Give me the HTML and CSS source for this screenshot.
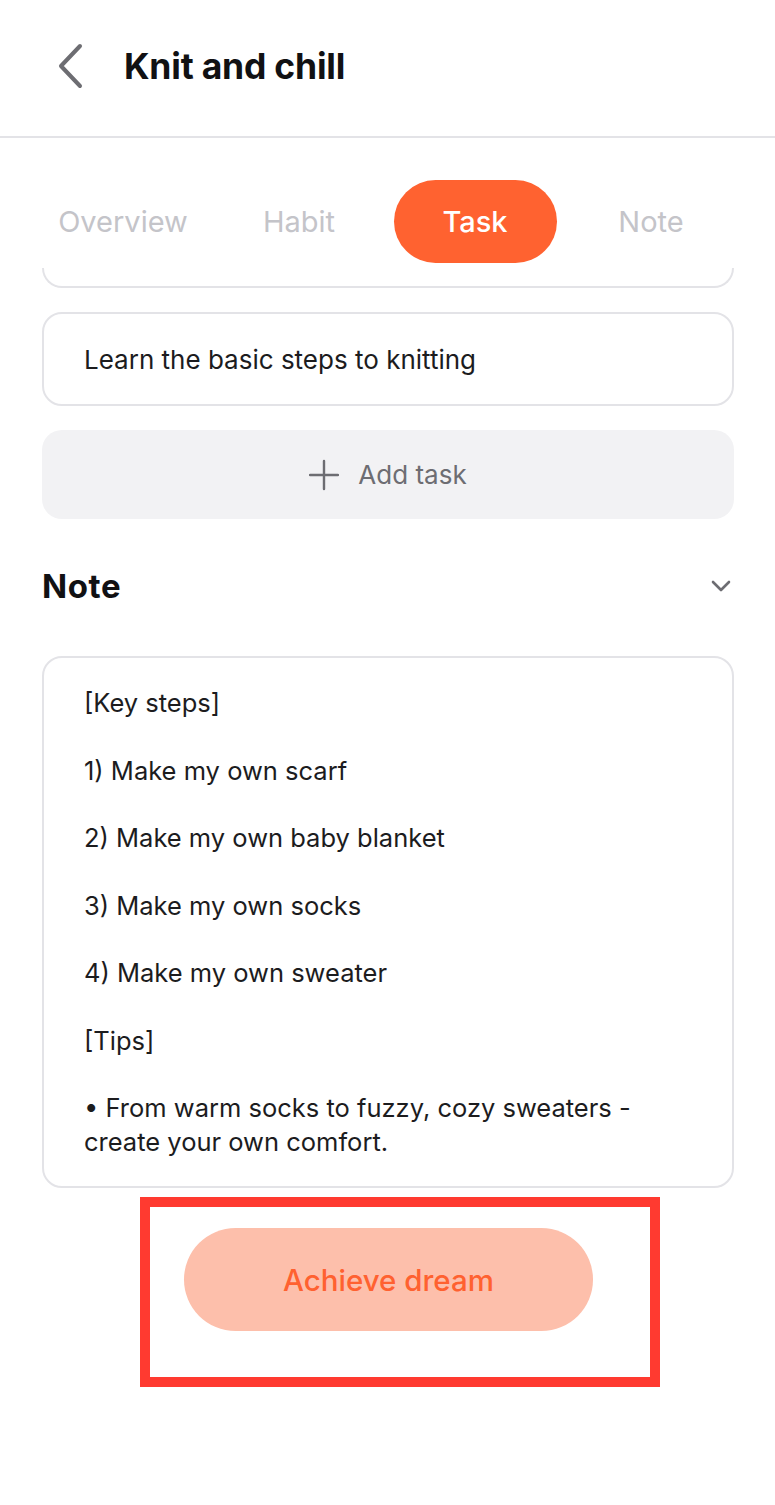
FILE: index.html
```html
<!DOCTYPE html>
<html lang="en">
<head>
<meta charset="utf-8">
<title>Knit and chill</title>
<link rel="stylesheet" href="styles.css">
</head>
<body>
<div class="screen">
  <header class="topbar">
    <svg class="back" width="30" height="46" viewBox="0 0 30 46" aria-hidden="true">
      <path d="M24 3 L5 23 L24 43" fill="none" stroke="#6d6d72" stroke-width="4" stroke-linecap="round" stroke-linejoin="round"/>
    </svg>
    <h1 class="title">Knit and chill</h1>
  </header>

  <nav class="tabs">
    <span class="tab">Overview</span>
    <span class="tab">Habit</span>
    <span class="tab tab-active">Task</span>
    <span class="tab">Note</span>
  </nav>

  <main class="content">
    <div class="peek-card"></div>
    <div class="task-card">Learn the basic steps to knitting</div>
    <div class="add-task">
      <svg width="30" height="32" viewBox="0 0 30 32" aria-hidden="true">
        <path d="M15 2 V30 M1 16 H29" stroke="#6d6d72" stroke-width="2.4" stroke-linecap="round"/>
      </svg>
      <span>Add task</span>
    </div>

    <div class="section-head">
      <h2 class="section-title">Note</h2>
      <svg width="22" height="14" viewBox="0 0 22 14" aria-hidden="true">
        <path d="M3 3 L11 11 L19 3" fill="none" stroke="#6d6d72" stroke-width="2.6" stroke-linecap="round" stroke-linejoin="round"/>
      </svg>
    </div>

    <div class="note-card">
      <p>[Key steps]</p>
      <p>1) Make my own scarf</p>
      <p>2) Make my own baby blanket</p>
      <p>3) Make my own socks</p>
      <p>4) Make my own sweater</p>
      <p>[Tips]</p>
      <p>• From warm socks to fuzzy, cozy sweaters -<br>create your own comfort.</p>
    </div>

    <div class="footer">
      <button class="achieve" type="button">Achieve dream</button>
      <div class="highlight" aria-hidden="true"></div>
    </div>
  </main>
</div>
</body>
</html>
```

FILE: styles.css
```css
* { box-sizing: border-box; }

html, body {
  margin: 0;
  padding: 0;
  background: #ffffff;
}

body {
  font-family: Inter, Roboto, "Liberation Sans", Arial, sans-serif;
  color: #1c1c1e;
}

.screen {
  width: 775px;
  min-height: 1505px;
  background: #ffffff;
}

.topbar {
  height: 138px;
  display: flex;
  align-items: center;
  padding-left: 56px;
  padding-bottom: 4px;
  border-bottom: 2px solid #e3e3e7;
}

.back {
  display: block;
  flex: none;
}

.title {
  margin: 0 0 0 38px;
  font-size: 35.5px;
  font-weight: 700;
  letter-spacing: -0.2px;
  color: #111113;
}

.tabs {
  display: grid;
  grid-template-columns: repeat(4, 176px);
  padding: 42px 36px 5px 35px;
  background: #ffffff;
}

.tab {
  height: 83px;
  display: flex;
  align-items: center;
  justify-content: center;
  font-size: 29px;
  font-weight: 400;
  color: #c4c4c9;
}

.tab-active {
  width: 163px;
  justify-self: center;
  border-radius: 42px;
  background: #ff6230;
  color: #ffffff;
  font-weight: 500;
}

.content {
  padding: 0 41px 0 42px;
}

.peek-card {
  height: 20px;
  border: 2px solid #e3e3e7;
  border-top: none;
  border-radius: 0 0 20px 20px;
}

.task-card {
  margin-top: 24px;
  height: 94px;
  display: flex;
  align-items: center;
  padding-left: 40px;
  border: 2px solid #e3e3e7;
  border-radius: 20px;
  font-size: 26px;
  color: #1c1c1e;
}

.add-task {
  margin-top: 24px;
  height: 89px;
  display: flex;
  align-items: center;
  justify-content: center;
  gap: 19px;
  background: #f2f2f4;
  border-radius: 20px;
  font-size: 26px;
  color: #6d6d72;
}

.add-task svg { display: block; }

.section-head {
  margin-top: 49px;
  height: 36px;
  display: flex;
  align-items: center;
  justify-content: space-between;
  padding-right: 2px;
}

.section-title {
  margin: 0;
  font-size: 33px;
  font-weight: 700;
  letter-spacing: 0.6px;
  color: #111113;
}

.note-card {
  margin-top: 52px;
  padding: 28px 40px 27px 40px;
  border: 2px solid #e3e3e7;
  border-radius: 20px;
  font-size: 25.5px;
  line-height: 34px;
  color: #1c1c1e;
}

.note-card p {
  margin: 0 0 33.5px 0;
}

.note-card p:last-child { margin-bottom: 0; }

.footer {
  position: relative;
  display: flex;
  justify-content: center;
  padding-top: 40px;
  height: 317px;
}

.achieve {
  width: 409px;
  height: 103px;
  border: none;
  border-radius: 52px;
  background: #fdbfab;
  color: #ff6130;
  font-family: inherit;
  font-size: 29.5px;
  font-weight: 500;
  margin-left: -41px;
  margin-right: -42px;
}

.highlight {
  position: absolute;
  left: 98px;
  top: 9px;
  width: 520px;
  height: 190px;
  border: 10px solid #ff3a30;
}
```
